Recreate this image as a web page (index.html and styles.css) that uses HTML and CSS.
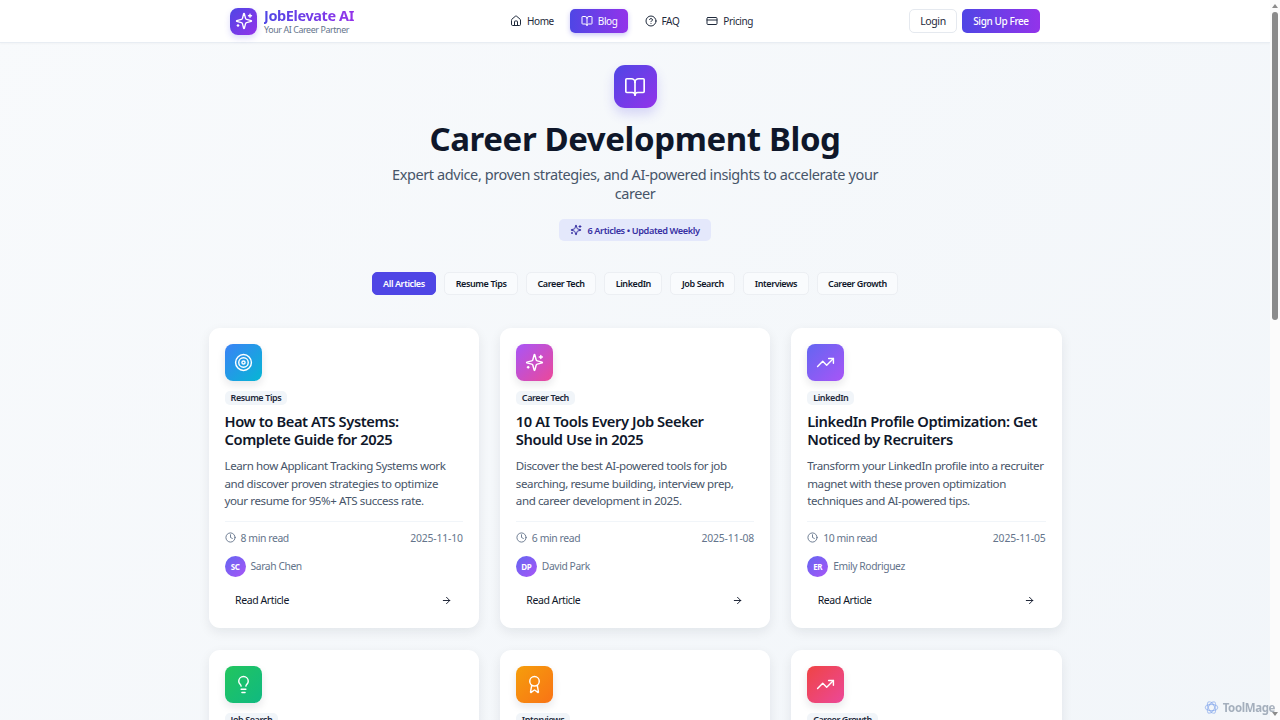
FILE: index.html

```html
<!DOCTYPE html>
<html lang="en">

<head>
    <meta charset="UTF-8">
    <meta name="viewport" content="width=device-width, initial-scale=1.0">
    <title>Career Development Blog - JobElevate AI</title>
    <link rel="stylesheet" href="styles.css">
</head>

<body>
    <!-- Icon sprite -->
    <svg class="sprite" width="0" height="0" aria-hidden="true">
        <symbol id="i-sparkles" viewBox="0 0 24 24">
            <path d="M9.937 15.5A2 2 0 0 0 8.5 14.063l-6.135-1.582a.5.5 0 0 1 0-.962L8.5 9.936A2 2 0 0 0 9.937 8.5l1.582-6.135a.5.5 0 0 1 .963 0L14.063 8.5A2 2 0 0 0 15.5 9.937l6.135 1.581a.5.5 0 0 1 0 .964L15.5 14.063a2 2 0 0 0-1.437 1.437l-1.582 6.135a.5.5 0 0 1-.963 0z" />
            <path d="M20 3v4M22 5h-4M4 17v2M5 18H3" />
        </symbol>
        <symbol id="i-book" viewBox="0 0 24 24">
            <path d="M12 7v14" />
            <path d="M3 18a1 1 0 0 1-1-1V4a1 1 0 0 1 1-1h5a4 4 0 0 1 4 4 4 4 0 0 1 4-4h5a1 1 0 0 1 1 1v13a1 1 0 0 1-1 1h-6a3 3 0 0 0-3 3 3 3 0 0 0-3-3z" />
        </symbol>
        <symbol id="i-home" viewBox="0 0 24 24">
            <path d="M15 21v-8a1 1 0 0 0-1-1h-4a1 1 0 0 0-1 1v8" />
            <path d="M3 10a2 2 0 0 1 .709-1.528l7-5.999a2 2 0 0 1 2.582 0l7 5.999A2 2 0 0 1 21 10v9a2 2 0 0 1-2 2H5a2 2 0 0 1-2-2z" />
        </symbol>
        <symbol id="i-help" viewBox="0 0 24 24">
            <circle cx="12" cy="12" r="10" />
            <path d="M9.09 9a3 3 0 0 1 5.83 1c0 2-3 3-3 3M12 17h.01" />
        </symbol>
        <symbol id="i-card" viewBox="0 0 24 24">
            <rect x="2" y="5" width="20" height="14" rx="2" />
            <path d="M2 10h20" />
        </symbol>
        <symbol id="i-target" viewBox="0 0 24 24">
            <circle cx="12" cy="12" r="10" />
            <circle cx="12" cy="12" r="6" />
            <circle cx="12" cy="12" r="2" />
        </symbol>
        <symbol id="i-trend" viewBox="0 0 24 24">
            <path d="M22 7l-8.5 8.5-5-5L2 17" />
            <path d="M16 7h6v6" />
        </symbol>
        <symbol id="i-bulb" viewBox="0 0 24 24">
            <path d="M15 14c.2-1 .7-1.700 1.500-2.500 1-.9 1.500-2.200 1.500-3.500A6 6 0 0 0 6 8c0 1 .2 2.200 1.500 3.500.7.7 1.300 1.500 1.500 2.500" />
            <path d="M9 18h6M10 22h4" />
        </symbol>
        <symbol id="i-award" viewBox="0 0 24 24">
            <path d="M15.477 12.890l1.515 8.526a.5.5 0 0 1-.81.47l-3.580-2.687a1 1 0 0 0-1.197 0l-3.586 2.686a.5.5 0 0 1-.81-.469l1.514-8.526" />
            <circle cx="12" cy="8" r="6" />
        </symbol>
        <symbol id="i-clock" viewBox="0 0 24 24">
            <circle cx="12" cy="12" r="10" />
            <path d="M12 6v6l4 2" />
        </symbol>
        <symbol id="i-arrow" viewBox="0 0 24 24">
            <path d="M5 12h14M12 5l7 7-7 7" />
        </symbol>
    </svg>

    <header class="site-header">
        <div class="header-inner">
            <a class="brand" href="#">
                <span class="brand-icon"><svg class="icon"><use href="#i-sparkles" /></svg></span>
                <span class="brand-text">
                    <span class="brand-name">JobElevate AI</span>
                    <span class="brand-tag">Your AI Career Partner</span>
                </span>
            </a>
            <nav class="main-nav">
                <a href="#"><svg class="icon"><use href="#i-home" /></svg>Home</a>
                <a href="#" class="active"><svg class="icon"><use href="#i-book" /></svg>Blog</a>
                <a href="#"><svg class="icon"><use href="#i-help" /></svg>FAQ</a>
                <a href="#"><svg class="icon"><use href="#i-card" /></svg>Pricing</a>
            </nav>
            <div class="header-actions">
                <button class="btn-login">Login</button>
                <button class="btn-signup">Sign Up Free</button>
            </div>
        </div>
    </header>

    <main class="blog-page">
        <section class="hero">
            <div class="hero-icon"><svg class="icon"><use href="#i-book" /></svg></div>
            <h1>Career Development Blog</h1>
            <p>Expert advice, proven strategies, and AI-powered insights to accelerate your career</p>
            <span class="hero-badge"><svg class="icon"><use href="#i-sparkles" /></svg>6 Articles • Updated Weekly</span>
        </section>

        <div class="filters">
            <button class="filter active">All Articles</button>
            <button class="filter">Resume Tips</button>
            <button class="filter">Career Tech</button>
            <button class="filter">LinkedIn</button>
            <button class="filter">Job Search</button>
            <button class="filter">Interviews</button>
            <button class="filter">Career Growth</button>
        </div>

        <section class="post-grid">
            <article class="post-card">
                <div class="post-icon blue"><svg class="icon"><use href="#i-target" /></svg></div>
                <span class="post-tag">Resume Tips</span>
                <h3>How to Beat ATS Systems: Complete Guide for 2025</h3>
                <p class="post-desc">Learn how Applicant Tracking Systems work and discover proven strategies to optimize your resume for 95%+ ATS success rate.</p>
                <div class="post-meta">
                    <span class="read-time"><svg class="icon"><use href="#i-clock" /></svg>8 min read</span>
                    <span class="post-date">2025-11-10</span>
                </div>
                <div class="post-author"><span class="avatar">SC</span>Sarah Chen</div>
                <a class="read-link" href="#">Read Article<svg class="icon"><use href="#i-arrow" /></svg></a>
            </article>

            <article class="post-card">
                <div class="post-icon pink"><svg class="icon"><use href="#i-sparkles" /></svg></div>
                <span class="post-tag">Career Tech</span>
                <h3>10 AI Tools Every Job Seeker Should Use in 2025</h3>
                <p class="post-desc">Discover the best AI-powered tools for job searching, resume building, interview prep, and career development in 2025.</p>
                <div class="post-meta">
                    <span class="read-time"><svg class="icon"><use href="#i-clock" /></svg>6 min read</span>
                    <span class="post-date">2025-11-08</span>
                </div>
                <div class="post-author"><span class="avatar">DP</span>David Park</div>
                <a class="read-link" href="#">Read Article<svg class="icon"><use href="#i-arrow" /></svg></a>
            </article>

            <article class="post-card">
                <div class="post-icon violet"><svg class="icon"><use href="#i-trend" /></svg></div>
                <span class="post-tag">LinkedIn</span>
                <h3>LinkedIn Profile Optimization: Get Noticed by Recruiters</h3>
                <p class="post-desc">Transform your LinkedIn profile into a recruiter magnet with these proven optimization techniques and AI-powered tips.</p>
                <div class="post-meta">
                    <span class="read-time"><svg class="icon"><use href="#i-clock" /></svg>10 min read</span>
                    <span class="post-date">2025-11-05</span>
                </div>
                <div class="post-author"><span class="avatar">ER</span>Emily Rodriguez</div>
                <a class="read-link" href="#">Read Article<svg class="icon"><use href="#i-arrow" /></svg></a>
            </article>

            <article class="post-card">
                <div class="post-icon green"><svg class="icon"><use href="#i-bulb" /></svg></div>
                <span class="post-tag">Job Search</span>
            </article>

            <article class="post-card">
                <div class="post-icon orange"><svg class="icon"><use href="#i-award" /></svg></div>
                <span class="post-tag">Interviews</span>
            </article>

            <article class="post-card">
                <div class="post-icon rose"><svg class="icon"><use href="#i-trend" /></svg></div>
                <span class="post-tag">Career Growth</span>
            </article>
        </section>
    </main>

    <!-- Window scrollbar as shown in the screenshot -->
    <div class="scrollbar">
        <span class="arrow up"></span>
        <span class="thumb"></span>
        <span class="arrow down"></span>
    </div>

    <!-- Watermark over the page corner -->
    <div class="watermark">
        <svg viewBox="0 0 24 24">
            <ellipse cx="12" cy="12" rx="10" ry="5" />
            <ellipse cx="12" cy="12" rx="10" ry="5" transform="rotate(60 12 12)" />
            <ellipse cx="12" cy="12" rx="10" ry="5" transform="rotate(120 12 12)" />
        </svg>
        ToolMage
    </div>
</body>

</html>
```

FILE: styles.css

```css
/* General styles */
* {
    margin: 0;
    padding: 0;
    box-sizing: border-box;
}

body {
    font-family: 'Noto Sans', 'Open Sans', sans-serif;
    letter-spacing: -0.025em;
    background: linear-gradient(135deg, #f8fafc, #f1f5f9);
    color: #0f172a;
    padding-right: 10px;
}

a {
    color: inherit;
    text-decoration: none;
}

button {
    font-family: inherit;
    letter-spacing: inherit;
    cursor: pointer;
}

.sprite {
    position: absolute;
}

.icon {
    width: 12px;
    height: 12px;
    flex-shrink: 0;
    fill: none;
    stroke: currentColor;
    stroke-width: 2;
    stroke-linecap: round;
    stroke-linejoin: round;
}

/* Header */
.site-header {
    height: 43px;
    background-color: #fff;
    border-bottom: 1px solid #e8edf3;
    box-shadow: 0 1px 2px rgba(15, 23, 42, 0.03);
}

.header-inner {
    max-width: 810px;
    height: 42px;
    margin: 0 auto;
    display: flex;
    justify-content: space-between;
    align-items: center;
}

.brand {
    display: flex;
    align-items: center;
    gap: 7px;
}

.brand-icon {
    width: 27px;
    height: 27px;
    border-radius: 8px;
    background: linear-gradient(135deg, #4f46e5, #9333ea);
    box-shadow: 0 3px 6px rgba(79, 70, 229, 0.2);
    color: #fff;
    display: flex;
    align-items: center;
    justify-content: center;
}

.brand-icon .icon {
    width: 18px;
    height: 18px;
    stroke-width: 1.8;
}

.brand-text {
    display: flex;
    flex-direction: column;
}

.brand-name {
    font-size: 14.5px;
    line-height: 17px;
    font-weight: 700;
    background: linear-gradient(90deg, #4f46e5, #9333ea);
    -webkit-background-clip: text;
    background-clip: text;
    color: transparent;
}

.brand-tag {
    font-size: 8.9px;
    line-height: 12px;
    color: #64748b;
}

.main-nav {
    display: flex;
    gap: 6px;
}

.main-nav a {
    display: flex;
    align-items: center;
    gap: 5px;
    height: 24px;
    padding: 0 10.5px;
    border-radius: 5px;
    font-size: 10px;
    color: #1e293b;
}

.main-nav a.active {
    background: linear-gradient(90deg, #4f46e5, #9333ea);
    box-shadow: 0 2px 5px rgba(79, 70, 229, 0.3);
    color: #fff;
}

.header-actions {
    display: flex;
    gap: 5px;
}

.btn-login,
.btn-signup {
    height: 24px;
    border-radius: 5px;
    font-size: 10.5px;
}

.btn-login {
    width: 48px;
    background-color: #fff;
    border: 1px solid #e5e9ef;
    color: #1e293b;
}

.btn-signup {
    width: 78px;
    border: none;
    background: linear-gradient(90deg, #4f46e5, #9333ea);
    color: #fff;
    font-size: 10px;
    font-weight: 500;
}

/* Hero */
.blog-page {
    padding: 22px 0 40px;
}

.hero {
    width: 500px;
    margin: 0 auto;
    display: flex;
    flex-direction: column;
    align-items: center;
    text-align: center;
}

.hero-icon {
    width: 43px;
    height: 43px;
    border-radius: 11px;
    background: linear-gradient(135deg, #4f46e5, #9333ea);
    box-shadow: 0 6px 12px rgba(79, 70, 229, 0.2);
    color: #fff;
    display: flex;
    align-items: center;
    justify-content: center;
}

.hero-icon .icon {
    width: 22px;
    height: 22px;
    stroke-width: 1.8;
}

.hero h1 {
    margin-top: 9px;
    font-size: 33px;
    line-height: 44px;
    font-weight: 700;
    color: #0f172a;
}

.hero p {
    margin-top: 4px;
    font-size: 14.5px;
    line-height: 19px;
    color: #475569;
}

.hero-badge {
    margin-top: 16px;
    height: 22px;
    padding: 0 11px;
    border-radius: 5px;
    background-color: #e4e8fb;
    color: #3730a3;
    font-size: 9.2px;
    font-weight: 600;
    display: flex;
    align-items: center;
    gap: 5px;
}

/* Filters */
.filters {
    margin-top: 31px;
    display: flex;
    justify-content: center;
    gap: 8px;
}

.filter {
    height: 23px;
    padding: 0 10.5px;
    border: 1px solid #eceff3;
    border-radius: 5px;
    background-color: #f9fbfd;
    color: #0f172a;
    font-size: 9px;
    font-weight: 600;
}

.filter.active {
    background-color: #4f46e5;
    border-color: #4f46e5;
    color: #fff;
}

/* Post cards */
.post-grid {
    max-width: 853px;
    margin: 33px auto 0;
    display: grid;
    grid-template-columns: repeat(3, 1fr);
    gap: 22px 21px;
}

.post-card {
    height: 300px;
    padding: 16px;
    background-color: #fff;
    border-radius: 11px;
    box-shadow: 0 4px 12px rgba(15, 23, 42, 0.08);
    display: flex;
    flex-direction: column;
    align-items: flex-start;
}

.post-icon {
    width: 37px;
    height: 37px;
    flex-shrink: 0;
    border-radius: 8px;
    box-shadow: 0 4px 8px rgba(15, 23, 42, 0.1);
    color: #fff;
    display: flex;
    align-items: center;
    justify-content: center;
}

.post-icon .icon {
    width: 19px;
    height: 19px;
    stroke-width: 1.8;
}

.post-icon.blue {
    background: linear-gradient(135deg, #3b82f6, #06b6d4);
}

.post-icon.pink {
    background: linear-gradient(135deg, #a855f7, #ec4899);
}

.post-icon.violet {
    background: linear-gradient(135deg, #6366f1, #a855f7);
}

.post-icon.green {
    background: linear-gradient(135deg, #22c55e, #10b981);
}

.post-icon.orange {
    background: linear-gradient(135deg, #f59e0b, #f97316);
}

.post-icon.rose {
    background: linear-gradient(135deg, #ef4444, #ec4899);
}

.post-tag {
    margin-top: 10px;
    height: 14px;
    padding: 0 6px;
    border-radius: 5px;
    background-color: #f1f5f9;
    color: #1e293b;
    font-size: 9px;
    font-weight: 600;
    line-height: 14px;
}

.post-card h3 {
    margin-top: 7px;
    font-size: 14.7px;
    line-height: 18.4px;
    font-weight: 600;
    color: #0f172a;
    max-width: 232px;
}

.post-desc {
    margin-top: 8.5px;
    font-size: 11.55px;
    line-height: 17.5px;
    color: #475569;
}

.post-meta {
    width: 100%;
    margin-top: 11px;
    padding-top: 9px;
    border-top: 1px solid #f1f5f9;
    display: flex;
    justify-content: space-between;
    align-items: center;
    font-size: 10.4px;
    line-height: 14px;
    color: #64748b;
}

.post-date {
    letter-spacing: -0.015em;
}

.read-time {
    display: flex;
    align-items: center;
    gap: 5px;
}

.read-time .icon {
    width: 11px;
    height: 11px;
}

.post-author {
    margin-top: 11px;
    display: flex;
    align-items: center;
    gap: 5px;
    font-size: 10.3px;
    color: #64748b;
}

.avatar {
    width: 21px;
    height: 21px;
    border-radius: 50%;
    background: linear-gradient(135deg, #6366f1, #a855f7);
    color: #fff;
    font-size: 8px;
    font-weight: 700;
    display: flex;
    align-items: center;
    justify-content: center;
}

.read-link {
    width: 100%;
    margin-top: 12px;
    height: 24px;
    padding: 0 11px 0 10.5px;
    display: flex;
    justify-content: space-between;
    align-items: center;
    font-size: 10.5px;
    color: #0f172a;
}

.read-link .icon {
    width: 11px;
    height: 11px;
}

/* Watermark */
.watermark {
    position: fixed;
    right: 5px;
    bottom: 5px;
    display: flex;
    align-items: center;
    gap: 4px;
    font-size: 11.5px;
    font-weight: 700;
    color: rgba(100, 116, 139, 0.55);
}

.watermark svg {
    width: 15px;
    height: 15px;
    fill: none;
    stroke: rgba(96, 140, 230, 0.45);
    stroke-width: 1.8;
}

/* Scrollbar */
.scrollbar {
    position: fixed;
    top: 0;
    right: 0;
    bottom: 0;
    width: 10px;
    padding: 4px 2px;
    background-color: #fbfbfb;
    display: flex;
    flex-direction: column;
    align-items: center;
}

.scrollbar .thumb {
    width: 6px;
    height: 308px;
    margin-top: 4px;
    border-radius: 3px;
    background-color: #8b8b8b;
}

.scrollbar .arrow {
    width: 0;
    height: 0;
    border-left: 3px solid transparent;
    border-right: 3px solid transparent;
}

.scrollbar .arrow.up {
    border-bottom: 4px solid #8b8b8b;
}

.scrollbar .arrow.down {
    margin-top: auto;
    border-top: 4px solid #8b8b8b;
}
```
